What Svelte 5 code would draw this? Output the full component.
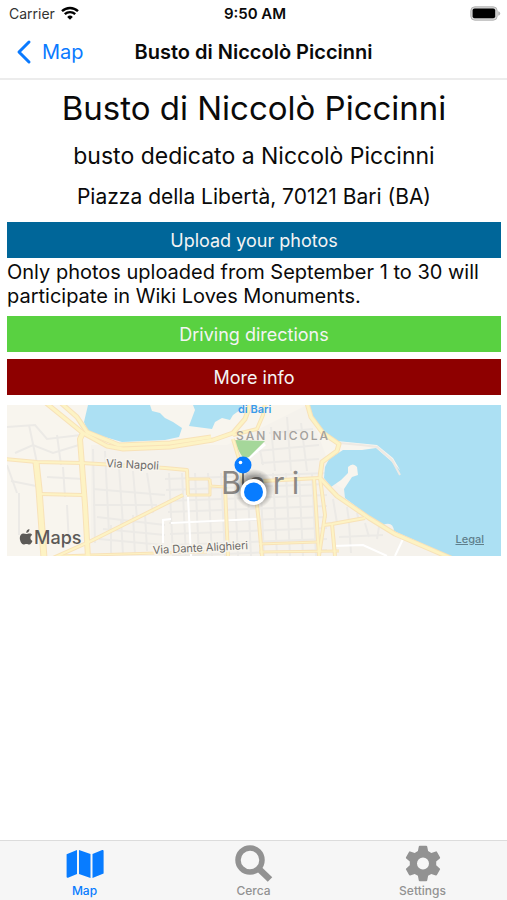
<script>
    const actions = [
        { id: 'upload', label: 'Upload your photos', note: 'Only photos uploaded from September 1 to 30 will participate in Wiki Loves Monuments.' },
        { id: 'directions', label: 'Driving directions' },
        { id: 'info', label: 'More info' }
    ];

    const tabs = [
        { id: 'map', label: 'Map' },
        { id: 'search', label: 'Cerca' },
        { id: 'settings', label: 'Settings' }
    ];

    let activeTab = $state('map');

    // small streets, only a faint grid
    const westStreets = [
        'M0 22 L28 20 L40 34 L74 30', 'M22 20 L30 58', 'M8 48 L26 40 L46 48 L72 40', 'M50 30 L54 60',
        'M4 76 L34 82', 'M40 72 L76 74', 'M56 62 L58 92', 'M86 44 L88 138', 'M98 46 L102 128', 'M112 62 L116 120',
        'M126 66 L130 114', 'M140 68 L146 108', 'M86 84 L158 90', 'M86 100 L150 100', 'M90 112 L158 120',
        'M96 124 L158 130', 'M92 134 L156 140', 'M104 120 L104 150', 'M114 114 L116 150', 'M126 110 L128 150',
        'M138 108 L140 146', 'M12 88 L12 130', 'M60 100 L62 140', 'M0 60 L10 88'
    ];
    const centerRows = [0, 1, 2, 3, 4, 5, 6, 7];
    const centerCols = [0, 1, 2, 3, 4, 5, 6, 7, 8, 9, 10, 11];

    const roads = [
        { d: 'M39 -2 L76 28 L100 41 L116 44 L163 42 L206 35 L226 28 L238 14 L244 -2', w: 4 },
        { d: 'M54 -2 L70 12 L80 27 L112 40 L163 38 L204 32', w: 4 },
        { d: 'M76 28 L73 34 L78 100 L81 153', w: 5 },
        { d: 'M-2 54 L30 57 L75 58 L158 63 L180 65 L181 90', w: 3 },
        { d: 'M29 57 L32 84 L37 153', w: 6 },
        { d: 'M33 89 L76 90', w: 3 },
        { d: 'M46 153 L84 136 L176 90', w: 3 },
        { d: 'M50 151 L150 148 L200 147', w: 2 },
        { d: 'M180 74 L202 74 L204 81 L218 82', w: 2 },
        { d: 'M180 90 L203 90 L203 74', w: 2 },
        { d: 'M226 34 L232 54 L236 78', w: 3 },
        { d: 'M226 30 L250 24 L256 10 L258 -2', w: 3 },
        { d: 'M256 76 L312 73', w: 3 },
        { d: 'M218 82 L221 151', w: 3 },
        { d: 'M249 92 L252 118 L255 151', w: 3 },
        { d: 'M252 139 L310 137', w: 2 },
        { d: 'M252 147 L332 146', w: 2 },
        { d: 'M300 -2 L304 12 L316 28 L332 39 L330 46 L315 57 L313 72', w: 4 },
        { d: 'M307 73 L312 151', w: 3 },
        { d: 'M313 73 L318 110 L312 151', w: 3 },
        { d: 'M317 120 L325 119 L358 113', w: 3 },
        { d: 'M325 119 L328 151', w: 3 },
        { d: 'M312 72 L330 91 L362 113 L388 129 L446 154', w: 4 }
    ];
</script>

<div class="screen">
    <div class="status-bar">
        <div class="carrier">
            <span>Carrier</span>
            <svg width="18" height="14" viewBox="0 0 18 14" fill="none" stroke="#000" stroke-width="2.4">
                <path d="M1 5.2a11.6 11.6 0 0 1 16 0" />
                <path d="M3.8 8.2a7.6 7.6 0 0 1 10.4 0" />
                <path d="M9 13.8 6.2 10.9a4 4 0 0 1 5.6 0Z" fill="#000" stroke="none" />
            </svg>
        </div>
        <div class="time">9:50 AM</div>
        <svg class="battery" width="31" height="15" viewBox="0 0 31 15">
            <rect x="0.8" y="0.8" width="26.4" height="13.4" rx="4" fill="#d4d4d4" stroke="#b4b4b4" />
            <rect x="2.6" y="2.6" width="22.6" height="9.6" rx="2" />
            <path d="M28.2 5.2q2 .6 2 2.3t-2 2.3z" fill="#b4b4b4" />
        </svg>
    </div>

    <header class="nav-bar">
        <button class="back">
            <svg width="16" height="26" viewBox="0 0 16 26" fill="none" stroke="#0a7aff" stroke-width="3" stroke-linecap="round" stroke-linejoin="round">
                <path d="M13 3 3 13l10 10" />
            </svg>
            Map
        </button>
        <div class="nav-title">Busto di Niccolò Piccinni</div>
    </header>

    <main>
        <h1>Busto di Niccolò Piccinni</h1>
        <h2>busto dedicato a Niccolò Piccinni</h2>
        <p class="address">Piazza della Libertà, 70121 Bari (BA)</p>

        <div class="actions">
            {#each actions as action}
                <div>
                    <button class="action {action.id}">{action.label}</button>
                    {#if action.note}
                        <p class="note">{action.note}</p>
                    {/if}
                </div>
            {/each}
        </div>

        <div class="map">
            <svg viewBox="0 0 494 151" preserveAspectRatio="xMidYMid slice">
                <defs>
                    <radialGradient id="shade">
                        <stop offset="0.5" stop-color="#000" stop-opacity="0.45" />
                        <stop offset="1" stop-color="#000" stop-opacity="0" />
                    </radialGradient>
                </defs>
                <rect width="494" height="151" fill="#f8f5ee" />
                <path d="M84 40 L220 40 L300 0 L330 80 L440 151 L84 151Z" fill="#f5f2ec" />

                <g fill="none" stroke="#eceae6" stroke-width="2">
                    {#each westStreets as d}
                        <path {d} />
                    {/each}
                    {#each centerRows as row}
                        <path d="M{158 + row} {74 + row * 11} L320 {68 + row * 11}" />
                    {/each}
                    {#each centerCols as col}
                        <path d="M{162 + col * 13} 68 L{166 + col * 13} 151" />
                    {/each}
                    <path d="M250 30 L256 60 M264 22 L268 66 M280 12 L284 66 M294 18 L300 66 M250 46 L312 40 M254 58 L312 54 M262 28 L306 24" />
                    <path d="M326 94 L330 118 M340 102 L342 116 M350 108 L352 116 M332 132 L376 130 M342 118 L344 148 M358 118 L362 132 M372 122 L370 134" />
                </g>
                <g fill="none" stroke="#fff" stroke-width="2">
                    <path d="M164 118 L250 114" />
                    <path d="M181 92 L184 151" />
                    <path d="M156 138 V115 L164 114" />
                    <path d="M326 141 L356 140 L380 151" />
                    <path d="M396 134 L388 151" />
                </g>
                <path d="M238 56 L258 39" stroke="#fff" stroke-width="3" />

                <g fill="#ace0f3">
                    <path d="M81 0 L77 17 L81 27 L115 37 L158 35 L172 32 L175 23 L166 17 L158 13 L153 8 L145 6 L143 0Z" />
                    <path d="M186 0 L188 5 L182 21 L205 24 L208 17 L215 13 L223 15 L226 10 L233 5 L236 0Z" />
                    <path d="M301 0 L305 12 L316 27 L330 36 L370 40 L386 53 L393 65 L384 56 L369 43 L355 45 L336 45 L322 54 L318 62 L317 73 L324 82 L334 75 L341 68 L341 62 Q346 57 350 62 L351 70 L345 72 L337 84 L338 93 L363 112 L376 120 Q386 116 387 126 L443 151 L494 151 L494 0Z" />
                </g>
                <path d="M332 38 L354 40 L370 42 L385 55 L393 70" fill="none" stroke="#eeeae4" stroke-width="2" />
                <path d="M227 35 L258 36 L242 52 L237 54 Q231 46 227 35Z" fill="#a5d79a" />

                <g fill="none" stroke-linejoin="round">
                    {#each roads as road}
                        <path d={road.d} stroke="#f8e2b8" stroke-width={road.w + 1} />
                    {/each}
                    {#each roads as road}
                        <path d={road.d} stroke="#fdf3c4" stroke-width={road.w - 1} />
                    {/each}
                </g>

                <g class="street">
                    <text x="99" y="62" transform="rotate(3 99 62)">Via Napoli</text>
                    <text x="146" y="149" transform="rotate(-3 146 149)">Via Dante Alighieri</text>
                </g>
                <text class="place" x="231" y="8">di Bari</text>
                <text class="district" x="229" y="35">SAN NICOLA</text>
                <text class="city" x="214" y="89">Bari</text>

                <path d="M236 66 V94" stroke="#777" stroke-width="2" />
                <circle cx="236" cy="60" r="8.5" fill="#087cff" />
                <circle cx="233.500" cy="57.500" r="1.800" fill="#fff" />
                <circle cx="247" cy="84" r="20" fill="url(#shade)" />
                <circle cx="246.500" cy="87" r="13" fill="#fff" />
                <circle cx="246.500" cy="87" r="9.500" fill="#087cff" />

                <g fill="#5c5a57">
                    <path d="M22.500 128.300c-1.200 0-2.200.8-3.100.8-1 0-2-.7-3-.7-2 0-3.600 1.800-3.600 4.700 0 3.200 2 6.500 3.800 6.500 1 0 1.600-.7 2.900-.7 1.200 0 1.600.7 2.800.7 1.400 0 2.600-2.100 3.100-3.600-2.500-1.200-2.600-4.700-.2-5.900-.6-1.100-1.600-1.800-2.700-1.800Z" />
                    <path d="M22.400 124c-2 .2-3.300 1.900-3.100 3.900 1.900 0 3.300-2 3.100-3.900Z" />
                    <text class="brand" x="27" y="139">Maps</text>
                </g>
            </svg>
            <a class="legal" href="#legal">Legal</a>
        </div>
    </main>

    <nav class="tab-bar">
        {#each tabs as tab}
            <button class="tab {activeTab === tab.id ? 'active' : ''}" onclick={() => activeTab = tab.id}>
                <svg width="38" height="38" viewBox="0 0 38 38" fill="currentColor">
                    {#if tab.id === 'map'}
                        <path d="M.6 9.200 11 4.900v24L2 32.700q-1.400.4-1.400-1ZM13 4.900l11.500 4v24l-11.500-4ZM26.500 8.900 36.200 5q1.400-.4 1.400 1v22.600l-11.100 4.300Z" />
                    {:else if tab.id === 'search'}
                        <circle cx="15" cy="15" r="12" fill="none" stroke="currentColor" stroke-width="5.5" />
                        <path d="M23.500 23.500 35 34.500" stroke="currentColor" stroke-width="6.500" />
                    {:else}
                        <path fill-rule="evenodd" d="M14.800 1.500q.2-.8 1-.8h6.400q.8 0 1 .8l.9 4.600 3.200 1.900 4.500-1.600q.7-.2 1.100.4l3.100 5.500q.4.7-.2 1.200L32.200 16.600v3.700l3.600 3.100q.6.500.2 1.200l-3.100 5.500q-.4.600-1.100.4l-4.500-1.600-3.200 1.900-.9 4.600q-.2.800-1 .8h-6.400q-.8 0-1-.8l-.9-4.600-3.200-1.900-4.500 1.600q-.7.200-1.100-.4L2 24.600q-.4-.7.2-1.200l3.600-3.100v-3.700L2.200 13.500q-.6-.5-.2-1.200l3.100-5.500q.4-.6 1.100-.4L10.700 8l3.200-1.900ZM19 12.400a6 6 0 1 0 0 12 6 6 0 0 0 0-12Z" />
                    {/if}
                </svg>
                <span>{tab.label}</span>
            </button>
        {/each}
    </nav>
</div>

<style>
    :global(body) {
        margin: 0;
        background: #fff;
    }

    .screen {
        display: flex;
        flex-direction: column;
        min-height: 100vh;
        font-family: Inter, 'Liberation Sans', sans-serif;
        color: #0a0a0a;
    }

    button {
        border: none;
        padding: 0;
        font-family: inherit;
        cursor: pointer;
    }

    .status-bar {
        display: grid;
        grid-template-columns: 1fr auto 1fr;
        align-items: center;
        height: 26px;
        padding: 0 6px 0 9px;
        font-size: 14px;
    }

    .carrier {
        display: flex;
        align-items: center;
        gap: 6px;
        color: #333;
    }

    .time {
        font-size: 15px;
        font-weight: 600;
    }

    .battery {
        justify-self: end;
    }

    .nav-bar {
        display: grid;
        grid-template-columns: 1fr auto 1fr;
        align-items: center;
        height: 52px;
        padding: 0 16px;
        border-bottom: 2px solid #ececec;
    }

    .back {
        display: flex;
        align-items: center;
        gap: 10px;
        background: none;
        color: #0a7aff;
        font-size: 20px;
    }

    .nav-title {
        font-size: 20px;
        font-weight: 600;
    }

    main {
        flex: 1;
        padding: 6px 6px 0 7px;
        text-align: center;
    }

    h1, h2, p {
        margin: 0;
        font-weight: 400;
    }

    h1 {
        font-size: 33px;
        line-height: 44px;
    }

    h2 {
        margin-top: 12px;
        font-size: 23px;
        line-height: 28px;
    }

    .address {
        margin-top: 13px;
        font-size: 21px;
        line-height: 28px;
    }

    .actions {
        display: flex;
        flex-direction: column;
        gap: 7px;
        margin-top: 11px;
    }

    .action {
        display: block;
        width: 100%;
        height: 36px;
        color: #f4f4f4;
        font-size: 18px;
    }

    .upload {
        background: #006699;
    }

    .directions {
        background: #59d141;
    }

    .info {
        background: #8e0000;
    }

    .note {
        padding: 2px 0 1px;
        text-align: left;
        font-size: 20px;
        line-height: 24px;
    }

    .map {
        position: relative;
        height: 151px;
        margin-top: 10px;
    }

    .map svg {
        display: block;
        width: 100%;
        height: 100%;
    }

    .street {
        font-size: 11px;
        fill: #6c6a68;
        stroke: #f8f5ee;
        stroke-width: 3px;
        paint-order: stroke;
    }

    .place {
        font-size: 11px;
        font-weight: 600;
        fill: #3a9bea;
    }

    .district {
        font-size: 12px;
        font-weight: 500;
        letter-spacing: 2px;
        fill: #a3a09c;
    }

    .city {
        font-size: 31px;
        letter-spacing: 7px;
        fill: #8b8885;
    }

    .brand {
        font-size: 18px;
        font-weight: 500;
    }

    .legal {
        position: absolute;
        right: 17px;
        bottom: 10px;
        color: #5f7f8c;
        font-size: 11px;
        font-weight: 500;
    }

    .tab-bar {
        display: grid;
        grid-template-columns: repeat(3, 1fr);
        height: 60px;
        box-sizing: border-box;
        border-top: 1px solid #dcdcdc;
        background: #f6f6f6;
    }

    .tab {
        display: flex;
        flex-direction: column;
        align-items: center;
        padding-top: 4px;
        background: none;
        color: #929292;
        font-size: 12px;
        font-weight: 500;
        line-height: 16px;
    }

    .tab.active {
        color: #087cff;
    }
</style>
